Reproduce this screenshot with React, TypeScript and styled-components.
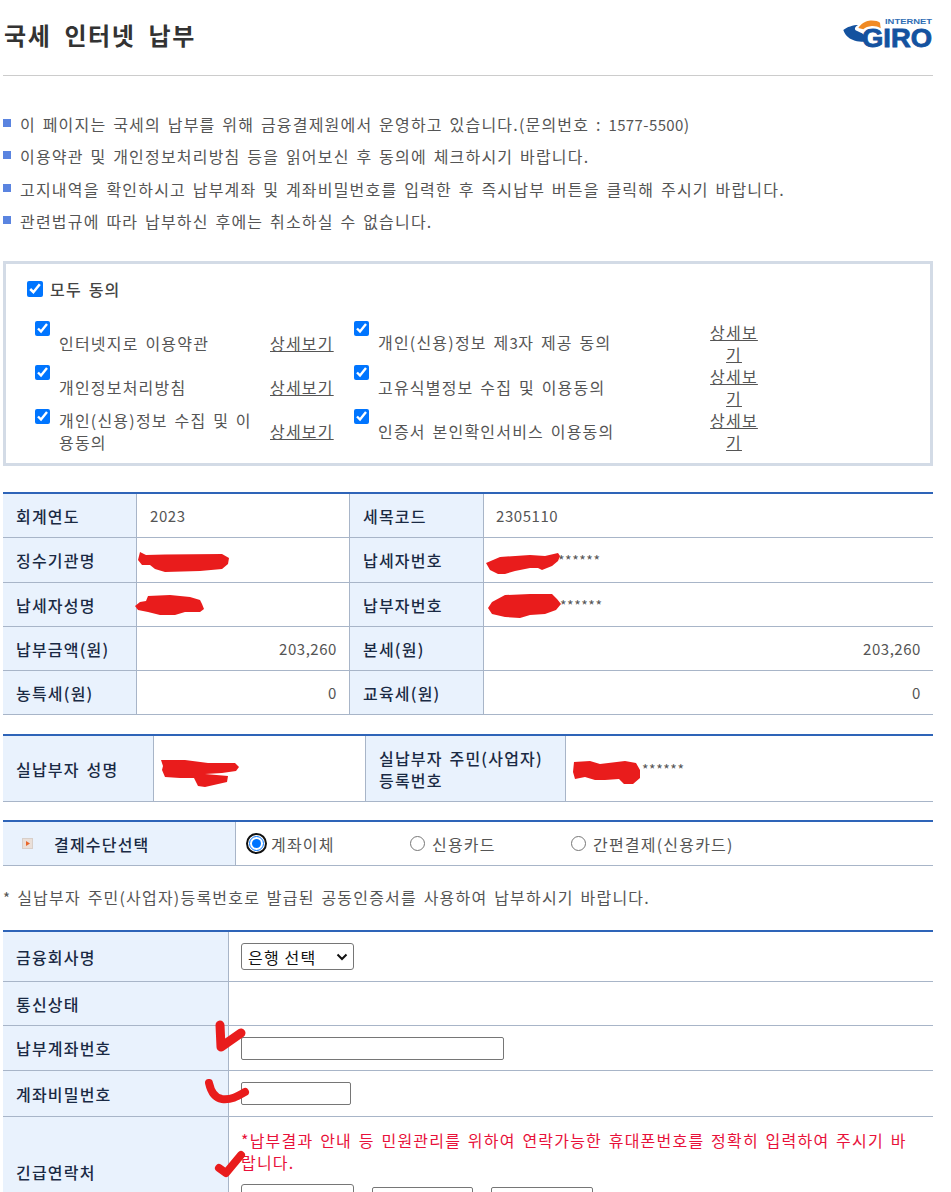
import React from "react";
import styled, { createGlobalStyle } from "styled-components";

const Global = createGlobalStyle`
  html, body { margin: 0; padding: 0; background: #fff; overflow: hidden; }
  * { box-sizing: border-box; }
`;

const chevron = encodeURIComponent(
  '<svg xmlns="http://www.w3.org/2000/svg" width="12" height="8" viewBox="0 0 12 8"><path d="M1.5 1.5 L6 6 L10.5 1.5" fill="none" stroke="#111" stroke-width="2"/></svg>'
);

const Page = styled.div`
  position: relative;
  width: 951px;
  height: 1192px;
  overflow: hidden;
  padding: 0 18px 0 3px;
  font-family: "Noto Sans CJK KR", "Liberation Sans", sans-serif;
  font-size: 16px;
  line-height: 22px;
  letter-spacing: 1.2px;
  word-spacing: 2px;
  color: #555;
`;
const Header = styled.header`
  height: 76px;
  border-bottom: 1px solid #ccc;
  display: flex;
  justify-content: space-between;
  align-items: flex-start;
`;
const Title = styled.h1`
  margin: 19px 0 0 1px;
  font-size: 24px;
  line-height: 32px;
  font-weight: 700;
  color: #333;
  letter-spacing: 1.6px;
  word-spacing: 6px;
`;
const Notices = styled.ul`
  list-style: none;
  margin: 36.5px 0 0;
  padding: 0;
  display: flex;
  flex-direction: column;
  gap: 10.5px;
`;
const Notice = styled.li`
  display: flex;
  gap: 9px;
  height: 22px;
  align-items: flex-start;
  &::before {
    content: "";
    width: 8px;
    height: 8px;
    margin-top: 6px;
    background: #5a84e0;
    flex: none;
  }
`;
const Num = styled.span`
  font-size: 15px;
  letter-spacing: 0.4px;
  word-spacing: 0;
`;
const Consent = styled.section`
  margin-top: 28.5px;
  height: 205px;
  border: 3px solid #d3dbe6;
  padding: 14px 21px 0;
`;
const AllRow = styled.label`
  display: flex;
  align-items: center;
  gap: 7px;
  font-weight: 500;
  color: #444;
`;
const Check = styled.input.attrs({ type: "checkbox", defaultChecked: true })<{ $size: number }>`
  margin: 0;
  display: block;
  flex: none;
  width: ${(p) => p.$size}px;
  height: ${(p) => p.$size}px;
`;
const ConsentGrid = styled.div`
  margin-top: 21px;
  margin-left: 8px;
  display: grid;
  grid-template-columns: 24px 211px 84px 24px 331px 50px;
  grid-auto-rows: 44px;
`;
const ConsentRow = styled.div`
  display: contents;
`;
const CheckCell = styled.div`
  padding-top: 0;
`;
const ConsentLabel = styled.div`
  display: flex;
  align-items: center;
  padding-right: 14px;
`;
const DetailLink = styled.a`
  display: flex;
  align-items: center;
  text-decoration: underline;
  color: #555;
`;
const DetailWrap = styled.a`
  display: block;
  text-align: center;
  text-decoration: underline;
  color: #555;
`;
const InfoTable = styled.table<{ $mt: number }>`
  margin-top: ${(p) => p.$mt}px;
  width: 930px;
  border-collapse: separate;
  border-spacing: 0;
  table-layout: fixed;
  border-top: 2px solid #2e64b8;
`;
const Th = styled.th<{ $h?: number }>`
  background: #e9f2fd;
  text-align: left;
  font-weight: 500;
  color: #1a2a44;
  padding: 1px 12px 0 13px;
  border-right: 1px solid #a8b5c8;
  border-bottom: 1px solid #a8b5c8;
  height: ${(p) => (p.$h ? `${p.$h}px` : "auto")};
`;
const Td = styled.td<{ $right?: boolean; $line?: boolean; $pl?: number }>`
  padding: 1px 12px 0 ${(p) => p.$pl ?? 13}px;
  border-bottom: 1px solid #a8b5c8;
  border-right: ${(p) => (p.$line ? "1px solid #a8b5c8" : "0")};
  text-align: ${(p) => (p.$right ? "right" : "left")};
  color: #555;
  font-size: 15px;
  letter-spacing: 0.55px;
`;
const Mask = styled.span<{ $pad: number }>`
  display: inline-block;
  padding-left: ${(p) => p.$pad}px;
  font-size: 14px;
`;
const MethodHead = styled.span`
  display: flex;
  align-items: center;
  gap: 21px;
  padding-left: 6px;
`;
const RadioRow = styled.div`
  display: flex;
  align-items: center;
  font-size: 16px;
  letter-spacing: 1.2px;
`;
const RadioLabel = styled.label<{ $w: number }>`
  display: flex;
  align-items: center;
  gap: 7px;
  width: ${(p) => p.$w}px;
`;
const Radio = styled.input.attrs({ type: "radio", name: "pay" })`
  margin: 0;
  display: block;
  width: 15px;
  height: 15px;
  flex: none;
  outline: none;
`;
const FocusRing = styled.span`
  display: block;
  flex: none;
  margin: -3px;
  padding: 1px;
  border: 2px solid #111;
  border-radius: 50%;
  background: #fff;
`;
const Note = styled.p`
  margin: 20px 0 0;
  height: 22px;
`;
const BankSelect = styled.select<{ $w: number }>`
  display: block;
  appearance: none;
  width: ${(p) => p.$w}px;
  height: 27px;
  font-family: inherit;
  font-size: 16px;
  letter-spacing: 1.2px;
  color: #111;
  background: #fff url("data:image/svg+xml,${chevron}") no-repeat right 5px center;
  border: 1px solid #767676;
  border-radius: 3px;
  padding: 0 0 0 6px;
`;
const TextInput = styled.input.attrs({ type: "text" })<{ $w: number }>`
  display: block;
  width: ${(p) => p.$w}px;
  height: 23px;
  border: 1px solid #767676;
  border-radius: 2px;
  padding: 0;
  background: #fff;
`;
const Warn = styled.p`
  margin: 0;
  color: #e8113a;
  font-size: 16px;
  letter-spacing: 1.2px;
  word-spacing: 2px;
`;
const PhoneRow = styled.div`
  display: flex;
  gap: 18px;
  margin-top: 11px;
  align-items: flex-start;
`;
const PhonePart = styled(TextInput)`
  margin-top: 3px;
`;
const TopAlignedTd = styled(Td)`
  vertical-align: top;
  padding-top: 12px;
`;
const BottomTh = styled(Th)`
  height: 110px;
`;
const LogoBox = styled.svg`
  margin: 16px -1px 0 0;
  letter-spacing: 0;
  word-spacing: 0;
`;
const Overlay = styled.svg`
  position: absolute;
  left: 0;
  top: 0;
  pointer-events: none;
`;
const Icon = styled.svg`
  flex: none;
`;

const Logo = () => (
  <LogoBox width="92" height="40" viewBox="0 0 92 40">
    <path d="M1.3 14 C5 11 11 9 16.3 9 C13 10.5 12 13 14 14.5 C17 16 20 17 21.3 18.3 L25.3 25.7 C20 26 16 25.5 13 24.7 C8 23 4 21 1.3 14Z" fill="#14529f" />
    <path d="M16.3 12 C19 8 23 5 27 4.7 C32 4.3 36 5 38 6.7 L38.7 12.3 C36 10.5 33 9.8 29.7 10 C26 10.3 23.5 11.5 21.3 13.3Z" fill="#f08a24" />
    <text x="43" y="8" fontFamily="Liberation Sans" fontSize="7.5" fontWeight="700" fill="#2f6db5" textLength="47" lengthAdjust="spacingAndGlyphs">INTERNET</text>
    <text x="20" y="31" fontFamily="Liberation Sans" fontSize="25" fontWeight="700" fill="#14529f" stroke="#14529f" strokeWidth="0.8" textLength="70" lengthAdjust="spacingAndGlyphs">GIRO</text>
  </LogoBox>
);

const App = () => (
  <Page>
    <Global />
    <Header>
      <Title>국세 인터넷 납부</Title>
      <Logo />
    </Header>
    <Notices>
      <Notice><span>이 페이지는 국세의 납부를 위해 금융결제원에서 운영하고 있습니다.(문의번호 : <Num>1577-5500</Num>)</span></Notice>
      <Notice>이용약관 및 개인정보처리방침 등을 읽어보신 후 동의에 체크하시기 바랍니다.</Notice>
      <Notice>고지내역을 확인하시고 납부계좌 및 계좌비밀번호를 입력한 후 즉시납부 버튼을 클릭해 주시기 바랍니다.</Notice>
      <Notice>관련법규에 따라 납부하신 후에는 취소하실 수 없습니다.</Notice>
    </Notices>
    <Consent>
      <AllRow><Check $size={16} />모두 동의</AllRow>
      <ConsentGrid>
        <ConsentRow>
          <CheckCell><Check $size={15} /></CheckCell>
          <ConsentLabel>인터넷지로 이용약관</ConsentLabel>
          <DetailLink>상세보기</DetailLink>
          <CheckCell><Check $size={15} /></CheckCell>
          <ConsentLabel><span>개인(신용)정보 제<Num>3</Num>자 제공 동의</span></ConsentLabel>
          <DetailWrap>상세보기</DetailWrap>
        </ConsentRow>
        <ConsentRow>
          <CheckCell><Check $size={15} /></CheckCell>
          <ConsentLabel>개인정보처리방침</ConsentLabel>
          <DetailLink>상세보기</DetailLink>
          <CheckCell><Check $size={15} /></CheckCell>
          <ConsentLabel>고유식별정보 수집 및 이용동의</ConsentLabel>
          <DetailWrap>상세보기</DetailWrap>
        </ConsentRow>
        <ConsentRow>
          <CheckCell><Check $size={15} /></CheckCell>
          <ConsentLabel>개인(신용)정보 수집 및 이용동의</ConsentLabel>
          <DetailLink>상세보기</DetailLink>
          <CheckCell><Check $size={15} /></CheckCell>
          <ConsentLabel>인증서 본인확인서비스 이용동의</ConsentLabel>
          <DetailWrap>상세보기</DetailWrap>
        </ConsentRow>
      </ConsentGrid>
    </Consent>

    <InfoTable $mt={26}>
      <colgroup><col width="134" /><col width="213" /><col width="134" /><col /></colgroup>
      <tbody>
        <tr><Th $h={44}>회계연도</Th><Td $line>2023</Td><Th>세목코드</Th><Td $pl={12}>2305110</Td></tr>
        <tr><Th $h={45}>징수기관명</Th><Td $line></Td><Th>납세자번호</Th><Td><Mask $pad={61}>******</Mask></Td></tr>
        <tr><Th $h={44}>납세자성명</Th><Td $line></Td><Th>납부자번호</Th><Td><Mask $pad={63}>******</Mask></Td></tr>
        <tr><Th $h={44}>납부금액(원)</Th><Td $line $right>203,260</Td><Th>본세(원)</Th><Td $right>203,260</Td></tr>
        <tr><Th $h={44}>농특세(원)</Th><Td $line $right>0</Td><Th>교육세(원)</Th><Td $right>0</Td></tr>
      </tbody>
    </InfoTable>

    <InfoTable $mt={19}>
      <colgroup><col width="151" /><col width="212" /><col width="200" /><col /></colgroup>
      <tbody>
        <tr><Th $h={66}>실납부자 성명</Th><Td $line></Td><Th>실납부자 주민(사업자)<br />등록번호</Th><Td><Mask $pad={63}>******</Mask></Td></tr>
      </tbody>
    </InfoTable>

    <InfoTable $mt={18}>
      <colgroup><col width="233" /><col /></colgroup>
      <tbody>
        <tr>
          <Th $h={44}>
            <MethodHead>
              <Icon width="11" height="11" viewBox="0 0 11 11">
                <rect width="11" height="11" fill="#eadfd8" />
                <rect x="0.5" y="0.5" width="10" height="10" fill="none" stroke="#d8cfc9" />
                <path d="M4 3 L8 5.5 L4 8Z" fill="#e8662a" />
              </Icon>
              결제수단선택
            </MethodHead>
          </Th>
          <Td>
            <RadioRow>
              <RadioLabel $w={161}><FocusRing><Radio defaultChecked /></FocusRing>계좌이체</RadioLabel>
              <RadioLabel $w={161}><Radio />신용카드</RadioLabel>
              <RadioLabel $w={200}><Radio />간편결제(신용카드)</RadioLabel>
            </RadioRow>
          </Td>
        </tr>
      </tbody>
    </InfoTable>

    <Note><Num>*</Num> 실납부자 주민(사업자)등록번호로 발급된 공동인증서를 사용하여 납부하시기 바랍니다.</Note>

    <InfoTable $mt={22}>
      <colgroup><col width="226" /><col /></colgroup>
      <tbody>
        <tr><Th $h={50}>금융회사명</Th><Td $pl={12}><BankSelect $w={113} defaultValue=""><option value="">은행 선택</option></BankSelect></Td></tr>
        <tr><Th $h={44}>통신상태</Th><Td /></tr>
        <tr><Th $h={45}>납부계좌번호</Th><Td $pl={12}><TextInput $w={263} /></Td></tr>
        <tr><Th $h={46}>계좌비밀번호</Th><Td $pl={12}><TextInput $w={110} /></Td></tr>
        <tr>
          <BottomTh>긴급연락처</BottomTh>
          <TopAlignedTd $pl={12}>
            <Warn>*납부결과 안내 등 민원관리를 위하여 연락가능한 휴대폰번호를 정확히 입력하여 주시기 바랍니다.</Warn>
            <PhoneRow><BankSelect $w={113} /><PhonePart $w={101} /><PhonePart $w={102} /></PhoneRow>
          </TopAlignedTd>
        </tr>
      </tbody>
    </InfoTable>

    <Overlay width="951" height="1192" viewBox="0 0 951 1192" fill="#e91c1c" strokeLinecap="round" strokeLinejoin="round">
      <path d="M140 552 L146 555 L165 554.5 L222 554 L229 558 L228 564 L222 569 L200 571 L165 572 L155 569 L150 565 L142 565 L138 560Z" />
      <path d="M148 596 L170 595 L190 597 L200 600 L202 604 L204 609 L200 612 L185 612 L175 615 L160 615 L148 612 L138 610 L135 606 L140 602 L146 601Z" />
      <path d="M486 563 L500 557 L530 555 L545 556 L558 553 L560 556 L558 561 L552 566 L542 570 L538 568 L530 568 L515 571 L505 574 L498 574 L490 570Z" />
      <path d="M505 595 L530 594 L552 594 L557 599 L561 604 L556 610 L545 614 L530 615 L520 618 L505 617 L492 614 L488 608 L492 602Z" />
      <path d="M161 760 L185 760 L208 763 L235 763 L239 767 L236 771 L222 773 L205 774 L228 776 L227 782 L205 787 L198 786 L194 778 L180 778 L165 777 L162 770 L163 766Z" />
      <path d="M574 762 L590 761 L600 764 L625 761 L636 763 L640 770 L640 778 L633 784 L624 784 L619 779 L605 780 L595 780 L585 777 L575 779 L573 772Z" />
      <g fill="none" stroke="#e91c1c">
        <path d="M220 1025 L221 1047 L241 1033" strokeWidth="9" />
        <path d="M209 1083 C211 1092 215 1098 222 1099 C232 1100 238 1096 245 1092" strokeWidth="8" />
        <path d="M219 1168 L226 1173 L241 1155" strokeWidth="8" />
      </g>
    </Overlay>
  </Page>
);

export default App;
